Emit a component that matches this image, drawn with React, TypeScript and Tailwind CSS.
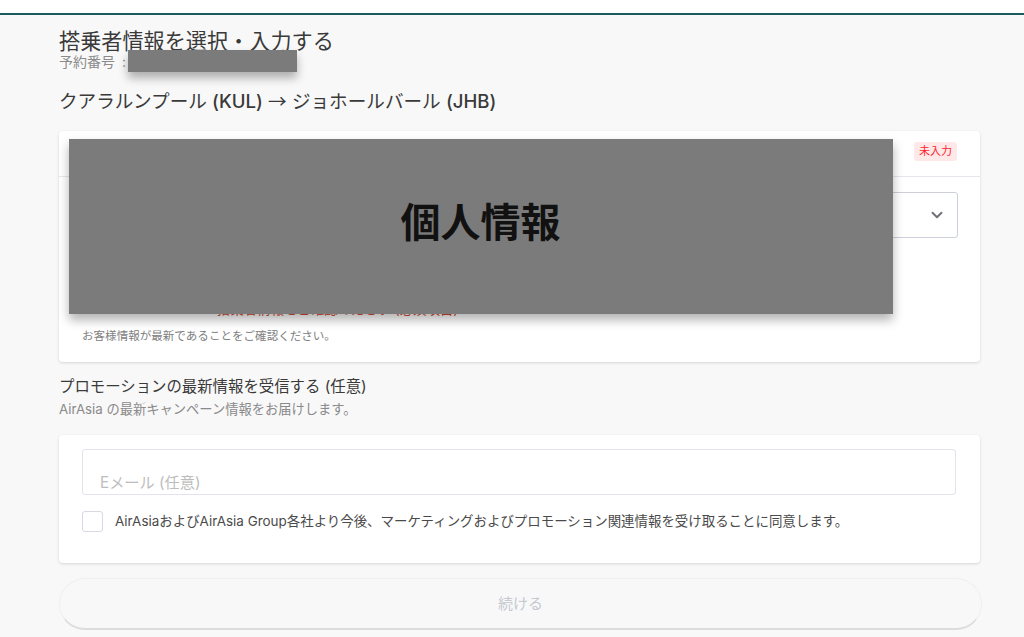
import { ChevronDown } from 'lucide-react';

const font = "font-['Inter','Noto_Sans_CJK_JP',sans-serif]";

export default function App() {
  return (
    <div className={`relative h-[637px] w-[1024px] overflow-hidden bg-[#f8f8f8] ${font}`}>
      {/* top bar */}
      <div className="h-[15px] border-b-2 border-[#1d5c5e] bg-white" />

      <main className="pl-[59px] pr-[44px]">
        <h1 className="mt-[14px] text-[21.15px] leading-[26px] text-[#3a3a3a]">搭乗者情報を選択・入力する</h1>
        <p className="-mt-[1px] text-[14px] leading-[16px] text-[#8a8a8a]">
          予約番号<span className="ml-[7px]">:</span>
        </p>
        <h2 className="mt-[17px] text-[18.6px] leading-[26px] text-[#3a3a3a]">
          クアラルンプール <span className="font-medium">(KUL)</span> <span className="font-['Noto_Sans_CJK_JP',sans-serif]">→</span> ジョホールバール <span className="font-medium">(JHB)</span>
        </h2>

        {/* passenger card */}
        <section className="mt-[17px] h-[231px] w-[921px] rounded bg-white shadow-[0_1px_3px_rgba(0,0,0,0.14)]">
          <div className="flex h-[46px] items-center justify-end border-b border-[#e6e6ec] pr-[23px] pb-[4px]">
            <span className="flex h-[19px] w-[43px] items-center justify-center rounded-[3px] bg-[#ffe8e8] text-[11px] text-[#ff1f2f]">
              未入力
            </span>
          </div>
          <div className="px-[23px] pt-[15px]">
            <div className="flex h-[46px] w-[876px] items-center justify-end rounded-[3px] border border-[#cdd0da] pr-[11px]">
              <ChevronDown className="h-[18px] w-[18px] text-[#6f6f76]" strokeWidth={2.5} />
            </div>
            <p className="mt-[63px] pl-[135px] text-[13.4px] leading-[16px] text-[#d9482a]">
              搭乗者情報をご確認ください (必須項目)
            </p>
            <p className="mt-[11px] text-[11.55px] leading-[16px] text-[#808080]">お客様情報が最新であることをご確認ください。</p>
          </div>
        </section>

        {/* promotion */}
        <h3 className="mt-[15px] text-[15.4px] leading-[20px] text-[#3a3a3a]">プロモーションの最新情報を受信する (任意)</h3>
        <p className="mt-[3px] text-[13.27px] leading-[18px] text-[#8a8a8a]">AirAsia の最新キャンペーン情報をお届けします。</p>

        <section className="mt-[17px] h-[128px] w-[921px] rounded bg-white px-[23px] pt-[14px] shadow-[0_1px_3px_rgba(0,0,0,0.14)]">
          <div className="flex h-[46px] w-[874px] items-end rounded-[3px] border border-[#e3e3ec] pb-[1px] pl-[17px] text-[15.2px] leading-[20px] text-[#bdbdbd]">
            Eメール (任意)
          </div>
          <label className="mt-[16px] flex items-center gap-[12px]">
            <span className="h-[21px] w-[21px] rounded-[3px] border border-[#d9d9e3] bg-white" />
            <span className="-mt-[2px] text-[13.45px] leading-[20px] text-[#4a4a4a]">
              AirAsiaおよびAirAsia Group各社より今後、マーケティングおよびプロモーション関連情報を受け取ることに同意します。
            </span>
          </label>
        </section>

        <button className="mt-[15px] h-[52px] w-[923px] rounded-full border border-[#efefef] border-b-2 border-b-[#dcdcdc] bg-[#f8f8f8] pt-[1px] text-[15px] text-[#c5c9d0]">
          続ける
        </button>
      </main>

      {/* redaction overlays */}
      <div className="absolute left-[128px] top-[50px] h-[22px] w-[169px] bg-[#7b7b7b] shadow-[0_6px_10px_rgba(0,0,0,0.3)]" />
      <div className="absolute left-[69px] top-[139px] flex h-[175px] w-[824px] items-center justify-center bg-[#7b7b7b] pr-[1px] pb-[7px] shadow-[0_6px_10px_rgba(0,0,0,0.3)]">
        <span className="text-[40px] font-bold text-[#111]">個人情報</span>
      </div>
    </div>
  );
}
